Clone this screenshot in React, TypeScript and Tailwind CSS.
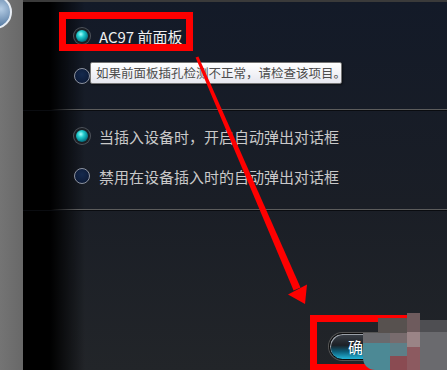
import React from "react";

// mosaic cells that blur out the right half of the button
const MOSAIC: { x: number; y: number; w: number; h: number; c: string }[] = [
  { x: 378, y: 318, w: 29, h: 15, c: "#57514f" },
  { x: 363, y: 333, w: 27, h: 10, c: "#6a6a6e" },
  { x: 363, y: 343, w: 27, h: 27, c: "#4c8995" },
  { x: 390, y: 333, w: 17, h: 10, c: "#786b6d" },
  { x: 390, y: 343, w: 17, h: 13, c: "#5d7f88" },
  { x: 390, y: 356, w: 17, h: 14, c: "#8a4b52" },
  { x: 407, y: 313, w: 13, h: 19, c: "#6e5b5d" },
  { x: 407, y: 332, w: 13, h: 15, c: "#9a8486" },
  { x: 407, y: 347, w: 13, h: 23, c: "#8c5a60" },
  { x: 420, y: 320, w: 27, h: 12, c: "#4e4e52" },
  { x: 420, y: 332, w: 27, h: 38, c: "#6a6a6e" },
];

function Radio({ checked }: { checked: boolean }) {
  if (checked) {
    return (
      <span className="relative h-4 w-4 shrink-0 rounded-full bg-[#1b1f24] shadow-[0_0_0_1px_#4d525a]">
        <span className="absolute inset-[2px] rounded-full bg-[radial-gradient(circle_at_40%_35%,#aaffff_0%,#22cccc_30%,#068090_65%,#022a35_100%)]" />
      </span>
    );
  }
  return (
    <span className="h-4 w-4 shrink-0 rounded-full border border-[#8d93a0] bg-[radial-gradient(circle_at_50%_40%,#152a4e,#0a1630)]" />
  );
}

function Option({ checked, label, bright }: { checked: boolean; label?: string; bright?: boolean }) {
  return (
    <div className="flex h-6 items-center gap-[9px] pl-[51px]">
      <Radio checked={checked} />
      {label && (
        <span className={`whitespace-nowrap text-[15px] leading-none ${bright ? "text-[#f0f0f0]" : "text-[#c9c9c9]"}`}>
          {label}
        </span>
      )}
    </div>
  );
}

function Divider({ className }: { className: string }) {
  return (
    <div
      className={`h-[2px] border-b border-[#0a0c10] bg-[linear-gradient(to_right,rgba(90,90,90,0)_28px,#5c5c5c_55px)] ${className}`}
    />
  );
}

export default function App() {
  return (
    <div className="relative flex h-[370px] w-[447px] overflow-hidden font-['Noto_Sans_CJK_SC','Microsoft_YaHei',sans-serif]">
      {/* left window edge */}
      <div className="relative w-[23px] shrink-0 bg-[linear-gradient(to_right,#747474,#686868)]">
        <div className="absolute -left-[22px] -top-[5px] h-[34px] w-[34px] rounded-full border-2 border-[#e8eef5] bg-[radial-gradient(circle_at_70%_40%,#b4cce4,#5b7fa6_60%,#34527a)]" />
      </div>

      {/* dialog body */}
      <div className="flex flex-1 flex-col border-t-2 border-[#3a3a3a] bg-[linear-gradient(to_right,#000_0px,#000_27px,rgba(0,0,0,0)_62px),linear-gradient(to_bottom,#131a28,#1a1e26_55%,#222529)] pt-[22px]">
        <Option checked label="AC97 前面板" bright />
        {/* label of this option is hidden under the tooltip */}
        <div className="mt-4">
          <Option checked={false} />
        </div>
        <Divider className="mt-[21px]" />
        <div className="mt-[13px]">
          <Option checked label="当插入设备时，开启自动弹出对话框" />
        </div>
        <div className="mt-4">
          <Option checked={false} label="禁用在设备插入时的自动弹出对话框" />
        </div>
        <Divider className="mt-[21px]" />

        <button className="ml-[306px] mt-[122px] flex h-[27px] w-[80px] items-center rounded-full border border-[#0a0a0a] bg-[linear-gradient(to_bottom,#3a4048_0%,#1c2026_45%,#0c5d78_70%,#23b4d8_100%)] pl-[18px] text-[15px] leading-none text-white shadow-[inset_1px_1px_0_#9aa0a8,0_0_0_1px_#555]">
          确定
        </button>
      </div>

      {/* tooltip */}
      <div className="absolute left-[90px] top-[62px] flex h-[22px] w-[252px] items-center whitespace-nowrap rounded-[2px] border border-[#767676] bg-[linear-gradient(to_bottom,#ffffff,#e6e7ef)] pl-[5px] text-[12.5px] leading-none text-[#4c4c4c] shadow-[1px_1px_2px_rgba(0,0,0,0.5)]">
        如果前面板插孔检测不正常，请检查该项目。
      </div>

      {/* annotation boxes */}
      <div className="absolute left-[59px] top-[12px] h-[39px] w-[134px] border-[7px] border-[#ff0000]" />
      <div className="absolute left-[310px] top-[315px] h-[56px] w-[97px] border-[7px] border-[#ff0000]" />

      {/* mosaic */}
      {MOSAIC.map((m, i) => (
        <div
          key={i}
          className={`absolute ${i === 2 ? "rounded-bl-[12px]" : ""}`}
          style={{ left: m.x, top: m.y, width: m.w, height: m.h, background: m.c }}
        />
      ))}

      {/* annotation arrow */}
      <svg className="pointer-events-none absolute inset-0" width="447" height="370" viewBox="0 0 447 370">
        <polygon points="195.6,57.6 198.4,56.4 300.5,287.5 293.6,290.5" fill="#ff0000" />
        <polygon points="305,304 288,294.5 307,284.5" fill="#ff0000" />
      </svg>
    </div>
  );
}
